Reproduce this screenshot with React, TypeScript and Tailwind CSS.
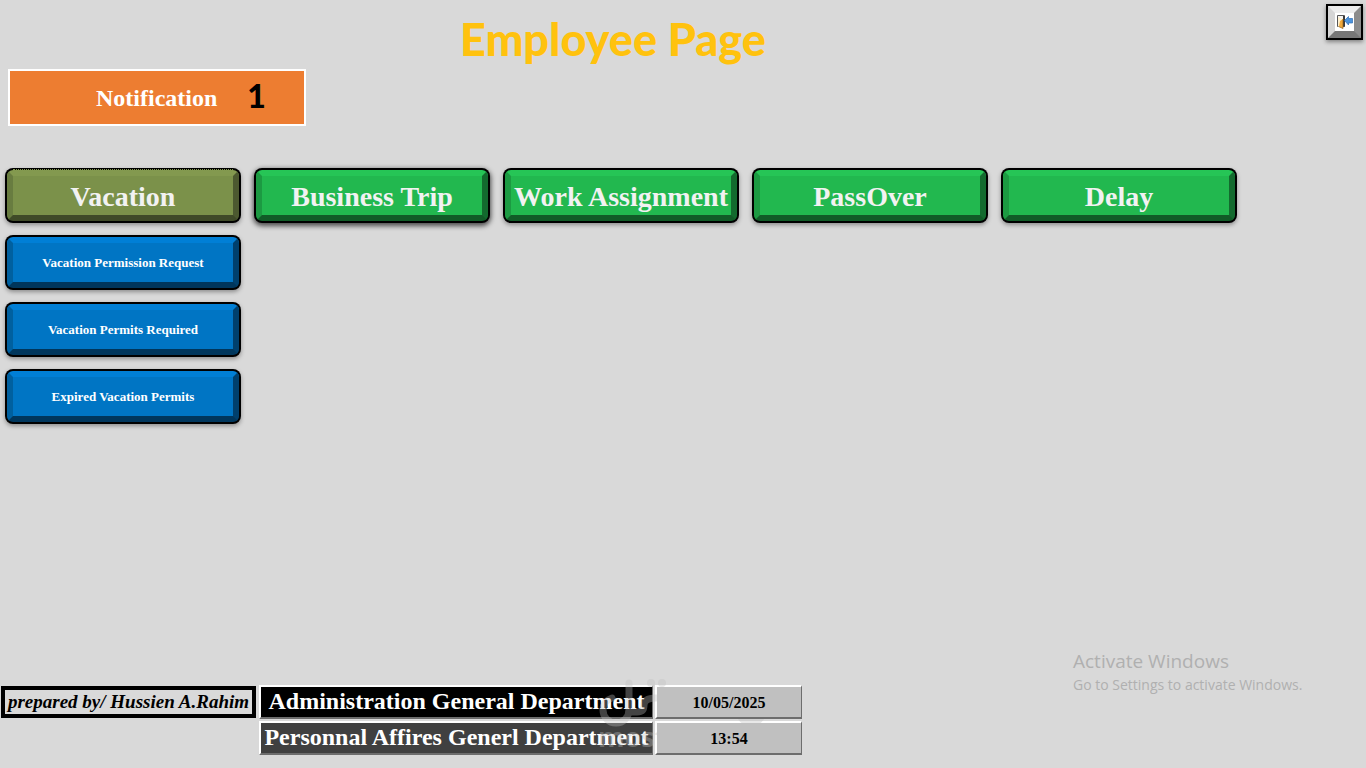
import type { ReactNode } from "react";

const SERIF = "font-['Liberation_Serif',serif]";

const tones = {
  olive: "border-t-[#83994f] border-r-[#4c5930] border-b-[#3f4a28] border-l-[#687c40] bg-[#7b914a]",
  green: "border-t-[#26c556] border-r-[#136a2e] border-b-[#115b27] border-l-[#1c9a42] bg-[#22b84f]",
  blue: "border-t-[#007fd6] border-r-[#00406d] border-b-[#00365c] border-l-[#00609f] bg-[#0075c4]",
};

interface BevelButtonProps {
  tone: keyof typeof tones;
  small?: boolean;
  active?: boolean;
  focused?: boolean;
  children: ReactNode;
}

function BevelButton({ tone, small, active, focused, children }: BevelButtonProps) {
  return (
    <button
      type="button"
      className={`relative h-[55px] w-[236px] rounded-lg bg-black p-0.5 font-bold ${SERIF} ${
        small ? "text-[13px] text-white" : "text-[28px] text-[#f2f2f2]"
      } ${focused ? "shadow-[0_2px_5px_1px_rgba(0,0,0,0.65)]" : "shadow-[0_2px_4px_rgba(0,0,0,0.35)]"}`}
    >
      <span
        className={`flex h-full items-center justify-center rounded-md border-6 whitespace-nowrap ${
          small ? "" : "pt-0.5"
        } ${tones[tone]}`}
      >
        {children}
      </span>
      {active && <span className="absolute inset-x-2 top-px border-t border-dotted border-[#83994f]" />}
    </button>
  );
}

function ExitIcon() {
  return (
    <svg viewBox="0 0 16 14" className="h-3.5 w-4" aria-hidden="true">
      <path d="M0.5 0.5h7v11h-7z" fill="#f4f4f4" stroke="#555" />
      <path d="M6 1h2v10.5H6z" fill="#3a3a3a" />
      <path d="M1 2l5 2v9.5l-5-2z" fill="#fff1cf" />
      <path d="M3 6l3-2v9.5L2 11.5z" fill="#f0a93c" />
      <path d="M6 4v9.5l-4.5-2" fill="none" stroke="#8a5a18" strokeWidth="0.7" />
      <path d="M7.5 5.5L11.5 1.5v2h4v4.5h-4v2z" fill="#4b93dc" stroke="#2f6db5" strokeWidth="0.7" />
    </svg>
  );
}

function Watermark() {
  return (
    <svg
      viewBox="0 0 170 80"
      className="pointer-events-none absolute -top-2 left-[598px] h-20 w-[170px] opacity-35"
      aria-hidden="true"
    >
      <g fill="none" stroke="#c0c0c0" strokeWidth="7" strokeLinecap="round">
        <path d="M31 6v27a13 13 0 0 1-26 0q0-9 9-12" />
        <path d="M31 35h8q7 0 7-7t12-7" />
      </g>
      <g fill="#c0c0c0">
        <circle cx="53" cy="6" r="4" />
        <circle cx="64" cy="6" r="4" />
        <path d="M140 42h26q-4 7-13 7t-13-7z" />
        <text x="0" y="70" fontSize="27" fontWeight="700" fontFamily="Open Sans, sans-serif">
          mostaql
        </text>
      </g>
    </svg>
  );
}

const raised = "border-t-2 border-l-2 border-r border-b-2 border-t-white border-l-white border-r-[#6d6d6d] border-b-[#6d6d6d]";

function Department({ dark, children }: { dark?: boolean; children: ReactNode }) {
  return (
    <div
      className={`flex h-[34px] w-[394px] items-center justify-center pb-0.5 text-2xl font-bold whitespace-nowrap text-white ${raised} ${
        dark ? "bg-black" : "bg-[#404040]"
      }`}
    >
      {children}
    </div>
  );
}

function Clock({ children }: { children: ReactNode }) {
  return (
    <div className={`flex h-[34px] w-[147px] items-center justify-center bg-[#c0c0c0] pt-0.5 font-bold text-black ${raised}`}>
      {children}
    </div>
  );
}

const tabs = ["Business Trip", "Work Assignment", "PassOver", "Delay"];
const links = ["Vacation Permission Request", "Vacation Permits Required", "Expired Vacation Permits"];

export default function App() {
  return (
    <div className="flex min-h-screen flex-col bg-[#d9d9d9]">
      <header className="flex items-start justify-between pt-1 pr-[3px]">
        <h1 className="pt-[5px] pl-[460px] font-['Lato',sans-serif] text-[45px] leading-[60px] font-black text-[#ffc20e]">
          Employee Page
        </h1>
        <button
          type="button"
          aria-label="Exit"
          className="h-9 w-[37px] border-2 border-black shadow-[0_2px_4px_rgba(0,0,0,0.4)]"
        >
          <span className="flex h-full items-center justify-center border-7 border-t-[#ededed] border-r-[#8c8c8c] border-b-[#777] border-l-[#d5d5d5] bg-white">
            <ExitIcon />
          </span>
        </button>
      </header>

      <div className={`ml-2 flex h-[57px] w-[298px] items-center border-2 border-white bg-[#ed7d31] pl-[86px] font-bold ${SERIF}`}>
        <span className="text-2xl text-white">Notification</span>
        <span className="ml-[30px] pb-1 font-['Lato',sans-serif] text-[32px] font-black text-black">1</span>
      </div>

      <main className="mt-[42px] flex flex-col gap-3 px-[5px]">
        <nav className="flex flex-wrap gap-[13px]">
          <BevelButton tone="olive" active>
            Vacation
          </BevelButton>
          {tabs.map((tab, i) => (
            <BevelButton key={tab} tone="green" focused={i === 0}>
              {tab}
            </BevelButton>
          ))}
        </nav>
        {links.map((link) => (
          <BevelButton key={link} tone="blue" small>
            {link}
          </BevelButton>
        ))}
      </main>

      <footer className={`relative mt-auto flex items-start pb-[13px] pl-px ${SERIF}`}>
        <div className="mt-px mr-[3px] flex h-8 w-[255px] items-center justify-center border-4 border-black text-[19px] font-bold whitespace-nowrap text-black italic">
          prepared by/ Hussien A.Rahim
        </div>
        <div className="grid grid-cols-[auto_auto] gap-0.5">
          <Department dark>Administration General Department</Department>
          <Clock>10/05/2025</Clock>
          <Department>Personnal Affires Generl Department</Department>
          <Clock>13:54</Clock>
        </div>
        <Watermark />
        <div className="-mt-9 mr-[57px] ml-auto w-[236px] font-['Open_Sans',sans-serif] whitespace-nowrap text-[#b0b0b0]">
          <p className="text-[19px] leading-6">Activate Windows</p>
          <p className="text-sm leading-6">Go to Settings to activate Windows.</p>
        </div>
      </footer>
    </div>
  );
}
